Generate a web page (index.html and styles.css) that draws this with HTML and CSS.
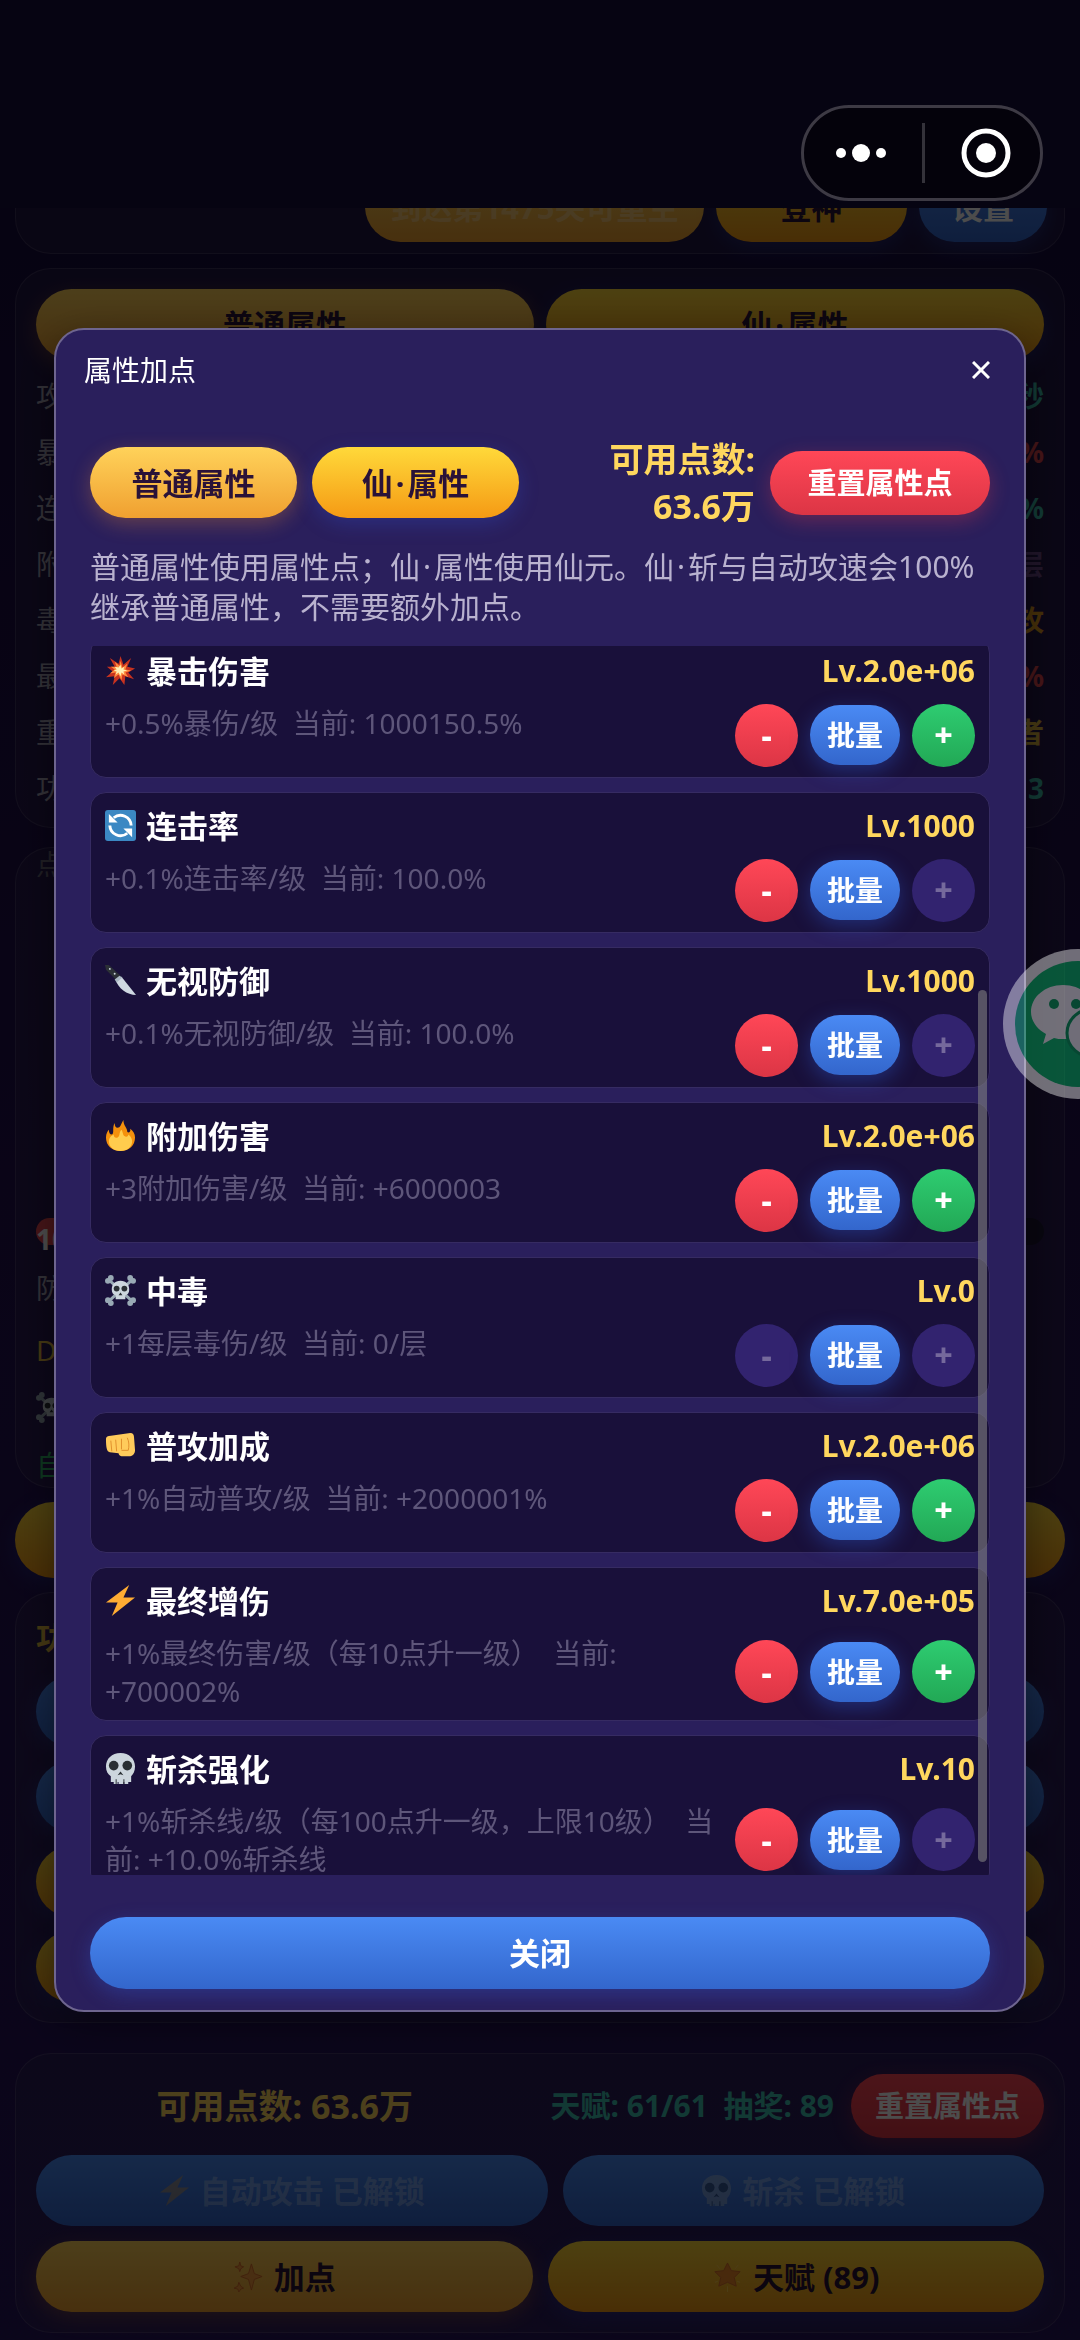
FILE: index.html
```html
<!DOCTYPE html>
<html lang="zh-CN">
<head>
<meta charset="utf-8">
<meta name="viewport" content="width=device-width, initial-scale=1">
<title>属性加点</title>
<link rel="stylesheet" href="styles.css">
</head>
<body>
<svg class="sprite" aria-hidden="true">
  <symbol id="i-burst" viewBox="0 0 32 32"><path fill="#c8321f" d="M16 1l3 9 8-7-4 9 8 2-7 4 6 7-9-3-1 9-5-7-7 7 2-9-9 1 7-6-6-5 8 0-5-9 9 6z"/><path fill="#ff8b3d" d="M16 6l2 7 5-4-2 6 6 1-6 2 3 5-6-3-1 6-3-6-5 4 2-6-6 1 5-4-4-3 6 0-2-5 5 4z"/><path fill="#fff0b5" d="M16 10l1 4 3-2-1 3 4 1-4 1 1 3-3-2-1 4-2-4-3 2 1-3-3-1 3-1-2-3 4 1z"/></symbol>
  <symbol id="i-cycle" viewBox="0 0 32 32"><rect width="32" height="32" rx="3" fill="#3b88c3"/><path fill="none" stroke="#fff" stroke-width="3" d="M9 8a11 11 0 0 1 18 8M23 24a11 11 0 0 1-18-8"/><path fill="#fff" d="M4 4v9h9zM28 28v-9h-9z"/></symbol>
  <symbol id="i-knife" viewBox="0 0 32 32"><path fill="#2b3036" d="M0 0l4 0 12 11-4 5L1 5z"/><circle cx="5" cy="4" r="1" fill="#ccd6dd"/><circle cx="10" cy="9" r="1" fill="#ccd6dd"/><path fill="#cfd8e2" d="M17 12l15 19c-9 0-19-7-21-16z"/><path fill="#aab8c4" d="M15 11l3 2-6 5-2-3z"/></symbol>
  <symbol id="i-fire" viewBox="0 0 32 32"><path fill="#f4900c" d="M1 18c0-4 2-7 3-8 0 3 1 5 3 5 3-1 0-7 3-12 0 3 1 5 3 5 3 0 3-3 6-8 0 6 4 8 4 12 1 2 4 0 3-3 3 2 5 5 5 9 0 8-6 14-15 14S1 26 1 18z"/><path fill="#ffcc4d" d="M4 22c0-4 3-6 5-7 0 3 2 4 4 3 3-2 1-5 4-8 2 3 1 6 4 7 2 1 3-1 3-2 3 2 4 5 4 7 0 6-5 10-12 10S4 28 4 22z"/></symbol>
  <symbol id="i-bones" viewBox="0 0 32 32"><path stroke="#99aab5" stroke-width="3" d="M4 5l24 22M28 5L4 27"/><g fill="#99aab5"><circle cx="3" cy="6" r="3"/><circle cx="6" cy="3" r="3"/><circle cx="29" cy="6" r="3"/><circle cx="26" cy="3" r="3"/><circle cx="3" cy="26" r="3"/><circle cx="6" cy="29" r="3"/><circle cx="29" cy="26" r="3"/><circle cx="26" cy="29" r="3"/></g><path fill="#ccd6dd" d="M16 6c6 0 9 4 9 9 0 3-1 5-4 6v4H11v-4c-3-1-4-3-4-6 0-5 3-9 9-9z"/><circle cx="12" cy="14" r="3" fill="#292f33"/><circle cx="20" cy="14" r="3" fill="#292f33"/><path fill="#292f33" d="M14 21l2-3 2 3z"/></symbol>
  <symbol id="i-fist" viewBox="0 0 32 32"><path fill="#ffcb5b" d="M1 9c0-2 2-3 5-3l20-3c3 0 4 2 4 5l1 13c0 3-2 6-5 6h-9c-2 0-3-2-3-3L5 23c-3-1-4-4-4-14z"/><path fill="none" stroke="#e08e2b" stroke-width="1" d="M6 11l1 11M11 10l1 12M17 9v11M23 8c2 4 2 9 1 13h-7"/></symbol>
  <symbol id="i-bolt" viewBox="0 0 32 32"><path fill="#ffac33" d="M25 0L1 18h12L7 32l24-19H19z"/></symbol>
  <symbol id="i-skull" viewBox="0 0 32 32"><path fill="#ccd6dd" d="M16 0c9 0 15 6 15 14 0 5-2 8-4 10v6h-3v2h-4v-2h-1v2h-5v-2h-1v2H9v-2H6v-6c-3-2-5-5-5-10C1 6 7 0 16 0z"/><circle cx="9" cy="13" r="5" fill="#292f33"/><circle cx="23" cy="13" r="5" fill="#292f33"/><path fill="#292f33" d="M13 23l3-4 3 4-3-1zM11 27h1v5h-1zM19 27h1v5h-1z"/></symbol>
  <symbol id="i-sparkle" viewBox="0 0 32 32"><path fill="#f59a3c" stroke="#d9702a" stroke-width="1" d="M19 3l3 10 8 3-8 3-3 11-3-11-8-3 8-3zM6 22l2 4 3 2-3 1-2 3-1-3-4-1 4-2zM7 1l1 4 3 1-3 2-1 3-1-3-4-2 4-1z"/></symbol>
  <symbol id="i-star" viewBox="0 0 32 32"><path fill="#f08a28" stroke="#d9702a" stroke-width="1" d="M16 2l4 8 9 1-6 6 2 9-9-4-9 4 2-9-6-6 9-1z"/><path stroke="#ffcc4d" stroke-width="1" d="M5 4l3 4M27 4l-3 4M16 26v6M3 22l3-1M29 22l-3-1"/></symbol>
</svg>

<header class="topbar"></header>

<main class="page" data-scroll="73">
  <section class="panel panel-actions">
    <div class="row row-end">
      <button class="btn gold wide-pad" disabled>到达第1475关可重生</button>
      <button class="btn amber ascend">登神</button>
      <button class="btn blue settings">设置</button>
    </div>
  </section>

  <section class="panel panel-stats">
    <div class="row even">
      <button class="btn gold">普通属性</button>
      <button class="btn amber"><span>仙<span class="dot">·</span>属性</span></button>
    </div>
    <dl class="stats">
      <div><dt>攻击速度</dt><dd class="teal">1次/秒</dd></div>
      <div><dt>暴击率</dt><dd class="red">100.0%</dd></div>
      <div><dt>连击率</dt><dd class="teal">100.0%</dd></div>
      <div><dt>附加伤害</dt><dd class="plum">0/层</dd></div>
      <div><dt>毒伤</dt><dd class="orange">普攻</dd></div>
      <div><dt>最终增伤</dt><dd class="red">700002%</dd></div>
      <div><dt>重生称号</dt><dd class="yellow">强者</dd></div>
      <div><dt>功德</dt><dd class="teal">3</dd></div>
    </dl>
  </section>

  <section class="panel panel-arena">
    <p class="hint">点击攻击</p>
    <div class="arena-info">
      <div class="hp">100%</div>
      <p>防御</p>
      <p class="yellow">DPS</p>
      <p><svg class="emoji"><use href="#i-bones"/></svg></p>
      <p class="green">自动</p>
    </div>
  </section>

  <button class="btn amber tall">攻击</button>

  <section class="panel panel-tools">
    <h2 class="yellow">功能</h2>
    <div class="stack">
      <button class="btn blue">背包</button>
      <button class="btn blue">商店</button>
      <button class="btn amber">排行</button>
      <button class="btn amber">任务</button>
    </div>
  </section>

  <section class="panel panel-points">
    <div class="row points-row">
      <strong class="points">可用点数: 63.6万</strong>
      <strong class="talent">天赋: 61/61&nbsp; 抽奖: 89</strong>
      <button class="btn danger small">重置属性点</button>
    </div>
    <div class="row unlocks">
      <button class="btn blue" disabled><svg class="emoji faint"><use href="#i-bolt"/></svg> 自动攻击 已解锁</button>
      <button class="btn blue" disabled><svg class="emoji faint"><use href="#i-skull"/></svg> 斩杀 已解锁</button>
    </div>
    <div class="row even">
      <button class="btn gold"><svg class="emoji"><use href="#i-sparkle"/></svg> 加点</button>
      <button class="btn amber"><svg class="emoji"><use href="#i-star"/></svg> 天赋 (89)</button>
    </div>
  </section>
</main>

<div class="overlay">
  <div class="modal" role="dialog" aria-labelledby="modal-title">
    <header class="modal-head">
      <h1 id="modal-title">属性加点</h1>
      <button class="x" aria-label="关闭窗口"><svg viewBox="0 0 18 18"><path d="M1 1l16 16M17 1L1 17"/></svg></button>
    </header>
    <div class="modal-body">
      <div class="modal-tools">
        <button class="btn gold tab">普通属性</button>
        <button class="btn amber tab"><span>仙<span class="dot">·</span>属性</span></button>
        <strong class="points">可用点数: 63.6万</strong>
        <button class="btn danger">重置属性点</button>
      </div>
      <p class="note">普通属性使用属性点；仙<span class="dot">·</span>属性使用仙元。仙<span class="dot">·</span>斩与自动攻速会100%继承普通属性，不需要额外加点。</p>
      <div class="list-wrap">
        <ul class="list" data-scroll="9">
          <li class="card">
            <div class="card-head"><h3><svg class="emoji"><use href="#i-burst"/></svg> 暴击伤害</h3><b>Lv.2.0e+06</b></div>
            <div class="card-body"><p>+0.5%暴伤/级&nbsp; 当前: 1000150.5%</p><div class="ctl"><button class="round minus">-</button><button class="batch">批量</button><button class="round plus">+</button></div></div>
          </li>
          <li class="card">
            <div class="card-head"><h3><svg class="emoji"><use href="#i-cycle"/></svg> 连击率</h3><b>Lv.1000</b></div>
            <div class="card-body"><p>+0.1%连击率/级&nbsp; 当前: 100.0%</p><div class="ctl"><button class="round minus">-</button><button class="batch">批量</button><button class="round plus" disabled>+</button></div></div>
          </li>
          <li class="card">
            <div class="card-head"><h3><svg class="emoji"><use href="#i-knife"/></svg> 无视防御</h3><b>Lv.1000</b></div>
            <div class="card-body"><p>+0.1%无视防御/级&nbsp; 当前: 100.0%</p><div class="ctl"><button class="round minus">-</button><button class="batch">批量</button><button class="round plus" disabled>+</button></div></div>
          </li>
          <li class="card">
            <div class="card-head"><h3><svg class="emoji"><use href="#i-fire"/></svg> 附加伤害</h3><b>Lv.2.0e+06</b></div>
            <div class="card-body"><p>+3附加伤害/级&nbsp; 当前: +6000003</p><div class="ctl"><button class="round minus">-</button><button class="batch">批量</button><button class="round plus">+</button></div></div>
          </li>
          <li class="card">
            <div class="card-head"><h3><svg class="emoji"><use href="#i-bones"/></svg> 中毒</h3><b>Lv.0</b></div>
            <div class="card-body"><p>+1每层毒伤/级&nbsp; 当前: 0/层</p><div class="ctl"><button class="round minus" disabled>-</button><button class="batch">批量</button><button class="round plus" disabled>+</button></div></div>
          </li>
          <li class="card">
            <div class="card-head"><h3><svg class="emoji"><use href="#i-fist"/></svg> 普攻加成</h3><b>Lv.2.0e+06</b></div>
            <div class="card-body"><p>+1%自动普攻/级&nbsp; 当前: +2000001%</p><div class="ctl"><button class="round minus">-</button><button class="batch">批量</button><button class="round plus">+</button></div></div>
          </li>
          <li class="card">
            <div class="card-head"><h3><svg class="emoji"><use href="#i-bolt"/></svg> 最终增伤</h3><b>Lv.7.0e+05</b></div>
            <div class="card-body"><p>+1%最终伤害/级（每10点升一级）&nbsp; 当前: +700002%</p><div class="ctl"><button class="round minus">-</button><button class="batch">批量</button><button class="round plus">+</button></div></div>
          </li>
          <li class="card">
            <div class="card-head"><h3><svg class="emoji"><use href="#i-skull"/></svg> 斩杀强化</h3><b>Lv.10</b></div>
            <div class="card-body"><p>+1%斩杀线/级（每100点升一级，上限10级）&nbsp; 当前: +10.0%斩杀线</p><div class="ctl"><button class="round minus">-</button><button class="batch">批量</button><button class="round plus" disabled>+</button></div></div>
          </li>
        </ul>
        <span class="thumb"></span>
      </div>
      <button class="btn blue close">关闭</button>
    </div>
  </div>
</div>

<div class="capsule">
  <button aria-label="更多"><svg width="54" height="54" viewBox="0 0 54 54"><g fill="#fff"><circle cx="7" cy="27" r="5"/><circle cx="27" cy="27" r="9"/><circle cx="47" cy="27" r="5"/></g></svg></button>
  <i></i>
  <button aria-label="退出"><svg width="54" height="54" viewBox="0 0 54 54"><circle cx="27" cy="27" r="22" fill="none" stroke="#fff" stroke-width="5"/><circle cx="27" cy="27" r="10" fill="#fff"/></svg></button>
</div>

<a class="wechat" href="#" aria-label="微信">
  <svg width="150" height="150" viewBox="0 0 150 150"><circle cx="75" cy="75" r="75" fill="#fff"/><circle cx="75" cy="75" r="63" fill="#07c169"/><path fill="#fff" d="M60 36c18 0 32 12 32 27S78 90 60 90c-3 0-6 0-9-1l-11 6 3-10c-9-5-15-13-15-22 0-15 14-27 32-27z"/><circle cx="51" cy="55" r="5" fill="#07a55a"/><circle cx="73" cy="55" r="5" fill="#07a55a"/><ellipse cx="92" cy="84" rx="28" ry="25" fill="#fff" stroke="#07a55a" stroke-width="3"/></svg>
</a>
<script src="app.js"></script>
</body>
</html>
```

FILE: styles.css
```css
* { box-sizing: border-box; margin: 0; padding: 0; }

:root {
  --yellow: #ffd75e;
  --teal: #3dbfae;
}

body {
  height: 100vh;
  display: flex;
  flex-direction: column;
  overflow: hidden;
  background: linear-gradient(#140a3a, #22104e 50%, #26145c);
  color: #fff;
  font: 400 28px/38px "Noto Sans", "Noto Sans CJK SC", sans-serif;
}

button { font: inherit; color: inherit; border: 0; cursor: pointer; }
ul { list-style: none; }
.sprite { position: absolute; width: 0; height: 0; }

.emoji { width: 31px; height: 31px; flex: none; overflow: visible; }
.faint { opacity: .4; }
.dot { margin: 0 3px; }

.topbar { flex: none; height: 208px; background: #150e3c; }

.page {
  flex: 1;
  min-height: 0;
  overflow: hidden;
  padding: 15px 15px 24px;
}

.panel {
  padding: 20px;
  border: 1px solid rgba(255, 255, 255, .12);
  border-radius: 36px;
  background: rgba(70, 60, 90, .22);
}

.row { display: flex; gap: 12px; }
.row-end { justify-content: flex-end; }
.even > * { flex: 1; }

.btn {
  height: 71px;
  padding: 0 30px;
  display: flex;
  align-items: center;
  justify-content: center;
  gap: 10px;
  border-radius: 36px;
  font-size: 31px;
  font-weight: 700;
  white-space: nowrap;
}
.gold { background: linear-gradient(#ffd25a, #f0a030); color: #2a1238; box-shadow: 0 6px 20px rgba(240, 140, 50, .3); }
.amber { background: linear-gradient(#ffd93a, #f59a14); color: #2a1238; box-shadow: 0 6px 20px rgba(50, 90, 230, .25); }
.blue { background: linear-gradient(#4a8af4, #3366cc); box-shadow: 0 6px 20px rgba(50, 100, 230, .3); }
.danger { height: 64px; background: linear-gradient(#ff4757, #dc3545); box-shadow: 0 6px 20px rgba(240, 60, 70, .3); font-size: 29px; }
.btn:disabled { color: rgba(255, 255, 255, .3); box-shadow: none; }

.panel-actions { padding: 20px 17px 11px; }
.ascend { width: 191px; }
.settings { width: 128px; }
.wide-pad { width: 339px; padding: 0; }

.panel-stats { margin-top: 14px; padding-bottom: 11px; }
.stats { padding-top: 8px; }
.stats div { display: flex; justify-content: space-between; line-height: 56px; }
.stats dt { color: #a8a4b8; }
.stats dd { font-weight: 700; }
.teal { color: var(--teal); }
.red { color: #e84850; }
.plum { color: #6e4a8c; }
.orange { color: #e8a020; }
.yellow { color: #e6bc40; }
.green { color: #30b868; }

.panel-arena { display: flex; flex-direction: column; height: 641px; margin-top: 19px; padding-top: 0; padding-bottom: 0; overflow: hidden; }
.hint { color: #6a6678; line-height: 32px; }
.arena-info { margin-top: auto; color: #a8a4b8; line-height: 62px; }
.arena-info p { height: 62px; }
.arena-info .green { height: 44px; line-height: 44px; }
.hp { height: 27px; margin-bottom: 12px; border-radius: 14px; background: linear-gradient(90deg, #e84850 60%, #1c1634 60%); color: #fff; font-weight: 700; line-height: 42px; }

.tall { width: 100%; height: 76px; margin: 14px 0; border-radius: 38px; }

.panel-tools h2 { height: 63px; font-size: 31px; line-height: 48px; }
.stack { display: grid; gap: 14px; }

.panel-points { margin-top: 30px; }
.points-row { align-items: center; gap: 17px; }
.points { color: var(--yellow); font-size: 34px; line-height: 47px; word-break: keep-all; }
.points-row .points { flex: 1; text-align: center; }
.talent { color: var(--teal); font-size: 30px; }
.small { padding: 0 24px; }
.unlocks { margin: 17px 0 15px; gap: 15px; }
.unlocks > :first-child { flex: 15; }
.unlocks > :last-child { flex: 14; }
.panel-points .even { gap: 15px; }

.overlay {
  position: fixed;
  inset: 0;
  display: flex;
  align-items: center;
  justify-content: center;
  background: rgba(0, 0, 0, .7);
}
.modal {
  width: 90%;
  height: 72vh;
  display: flex;
  flex-direction: column;
  border: 2px solid #6e658f;
  border-radius: 30px;
  background: #2a1f5c;
  box-shadow: 0 12px 40px rgba(0, 0, 0, .4);
}
.modal-head { display: flex; align-items: center; justify-content: space-between; height: 80px; padding: 0 26px 0 28px; }
.modal-head h1 { font-size: 28px; font-weight: 400; }
.x { display: grid; place-items: center; width: 34px; height: 40px; background: none; }
.x svg { width: 18px; height: 18px; fill: none; stroke: #fff; stroke-width: 3; }

.modal-body { flex: 1; min-height: 0; display: flex; flex-direction: column; padding: 26px 34px 21px; }
.modal-tools { display: flex; align-items: center; gap: 15px; }
.modal-tools .tab { width: 207px; }
.modal-tools .points { flex: 1; text-align: right; }
.modal-tools .danger { width: 220px; }
.note { margin: 17px 0 19px; color: #b9b2cf; font-size: 30px; line-height: 40px; }

.list-wrap { position: relative; flex: 1; min-height: 0; }
.list { height: 100%; overflow: hidden; display: flex; flex-direction: column; gap: 14px; }
.thumb { position: absolute; top: 28%; right: 3px; bottom: 13px; width: 9px; border-radius: 5px; background: rgba(128, 128, 128, .6); }

.card { flex: none; padding: 10px 14px; border: 1px solid #362b62; border-radius: 16px; background: #19103a; }
.card-head { display: flex; justify-content: space-between; align-items: center; margin-bottom: 10px; height: 46px; }
.card-head h3 { display: flex; align-items: center; gap: 10px; font-size: 31px; font-weight: 700; }
.card-head b { color: var(--yellow); font-size: 30px; font-weight: 700; }
.card-body { display: flex; align-items: flex-start; gap: 20px; }
.card-body p { flex: 1; color: #5e567a; }
.ctl { display: flex; align-items: center; align-self: center; gap: 12px; }
.round { width: 63px; height: 63px; border-radius: 50%; font-size: 32px; font-weight: 800; }
.minus { background: linear-gradient(#ff4757, #dc3545); }
.plus { background: linear-gradient(#2ecc71, #22a855); }
.round:disabled { background: #32236f; color: #75699c; }
.batch { width: 90px; height: 60px; border-radius: 30px; background: linear-gradient(#4a8af4, #3366cc); box-shadow: 0 6px 20px rgba(50, 100, 230, .35); font-size: 28px; font-weight: 700; }

.close { width: 100%; flex: none; height: 72px; margin-top: 42px; }

.capsule {
  position: fixed;
  top: 105px;
  right: 37px;
  display: flex;
  align-items: center;
  justify-content: space-between;
  width: 242px;
  height: 96px;
  padding: 0 27px 0 30px;
  border: 3px solid #3d3a44;
  border-radius: 48px;
  background: #04020b;
}
.capsule button { display: grid; background: none; }
.capsule i { width: 3px; height: 60px; background: #34323a; }

.wechat { position: fixed; top: 949px; right: -73px; opacity: .42; }
.wechat svg { display: block; }
```

FILE: app.js
```js
document.querySelectorAll('[data-scroll]').forEach(function (el) {
  el.scrollTop = Number(el.dataset.scroll);
});
```
